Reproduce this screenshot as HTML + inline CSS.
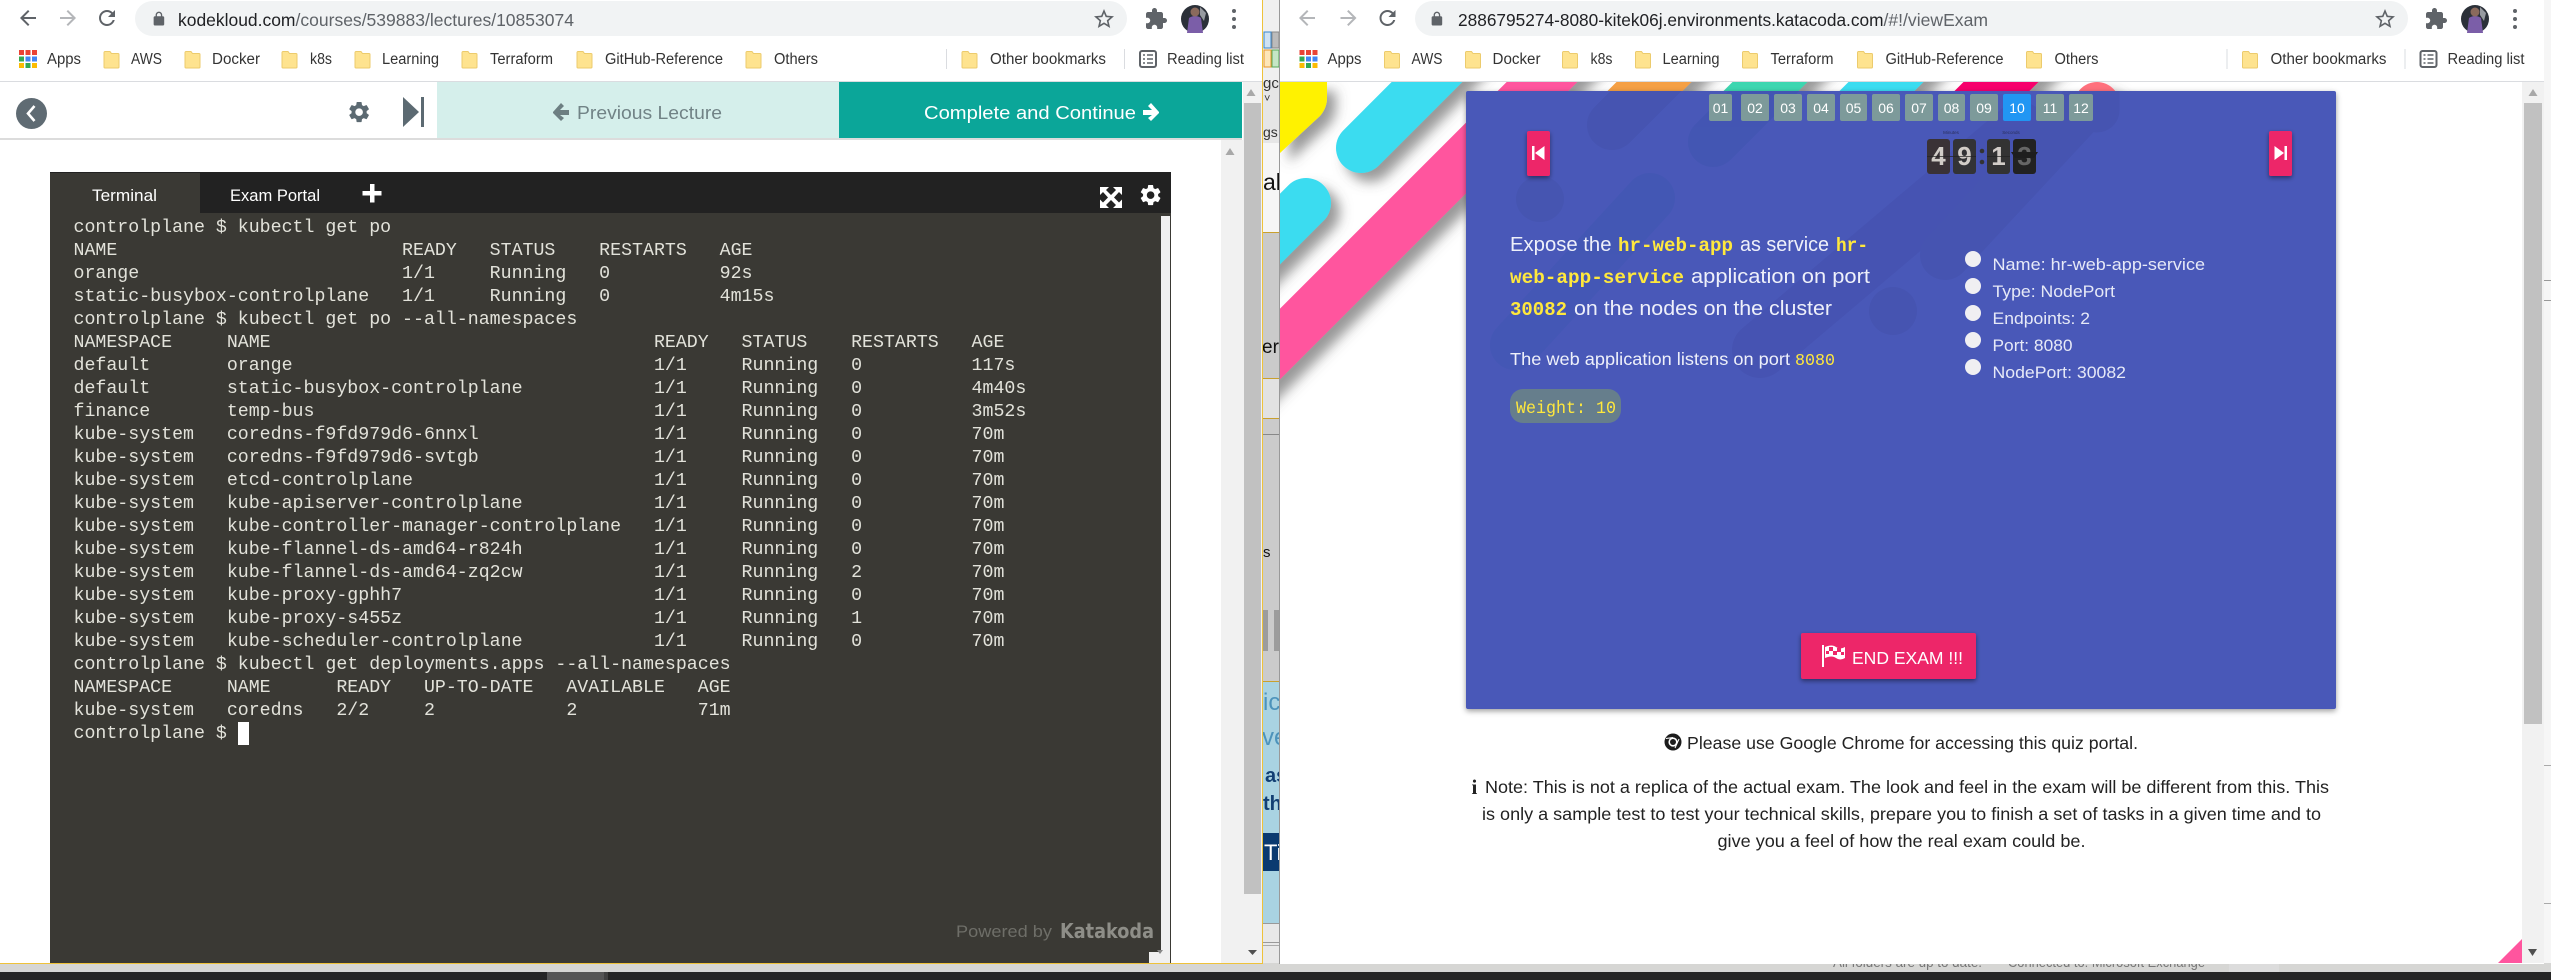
<!DOCTYPE html>
<html><head><meta charset="utf-8"><title>Exam</title>
<style>
html,body{margin:0;padding:0;background:#ccc}
body{width:2551px;height:980px;overflow:hidden;position:relative}
svg{position:absolute;left:0;top:0;display:block}
text{font-family:"Liberation Sans",sans-serif}
.bm{font-size:15.5px;fill:#333}
.mono{font-family:"Liberation Mono",monospace;font-weight:bold;fill:#ffe83c}
.q{font-size:20.5px;fill:#eef0fa}
.li{font-size:17px;fill:#e6e9f7}
.n{font-size:14px;fill:#fff;text-anchor:middle}
.dg{font-size:26px;font-weight:bold;fill:#d2cdc8;text-anchor:middle}
.nt{font-size:17.5px;fill:#222}
pre{position:absolute;left:73.5px;top:216.6px;margin:0;font:18.25px/23px "Liberation Mono",monospace;color:#e2e2da}
</style></head><body>
<svg width="2551" height="980" viewBox="0 0 2551 980" xmlns="http://www.w3.org/2000/svg">
<defs>
<path id="gear" d="M19.14 12.94c.04-.3.06-.61.06-.94 0-.32-.02-.64-.07-.94l2.03-1.58c.18-.14.23-.41.12-.61l-1.92-3.32c-.12-.22-.37-.29-.59-.22l-2.39.96c-.5-.38-1.03-.7-1.62-.94l-.36-2.54c-.04-.24-.24-.41-.48-.41h-3.84c-.24 0-.43.17-.47.41l-.36 2.54c-.59.24-1.13.57-1.62.94l-2.39-.96c-.22-.08-.47 0-.59.22L2.74 8.87c-.12.21-.08.47.12.61l2.03 1.58c-.05.3-.09.63-.09.94s.02.64.07.94l-2.03 1.58c-.18.14-.23.41-.12.61l1.92 3.32c.12.22.37.29.59.22l2.39-.96c.5.38 1.03.7 1.62.94l.36 2.54c.05.24.24.41.48.41h3.84c.24 0 .44-.17.47-.41l.36-2.54c.59-.24 1.13-.56 1.62-.94l2.39.96c.22.08.47 0 .59-.22l1.92-3.32c.12-.22.07-.47-.12-.61l-2.01-1.58zM12 15.6c-1.98 0-3.6-1.62-3.6-3.6s1.62-3.6 3.6-3.6 3.6 1.62 3.6 3.6-1.62 3.6-3.6 3.6z"/>
<path id="back" d="M20 11H7.83l5.59-5.59L12 4l-8 8 8 8 1.41-1.41L7.83 13H20v-2z"/>
<path id="reload" d="M17.65 6.35C16.2 4.9 14.21 4 12 4c-4.42 0-7.99 3.58-7.99 8s3.57 8 7.99 8c3.73 0 6.84-2.55 7.73-6h-2.08c-.82 2.33-3.04 4-5.65 4-3.31 0-6-2.69-6-6s2.69-6 6-6c1.66 0 3.14.69 4.22 1.78L13 11h7V4l-2.35 2.35z"/>
<path id="lock" d="M18 8h-1V6c0-2.76-2.24-5-5-5S7 3.24 7 6v2H6c-1.1 0-2 .9-2 2v10c0 1.1.9 2 2 2h12c1.1 0 2-.9 2-2V10c0-1.1-.9-2-2-2zM9 6c0-1.66 1.34-3 3-3s3 1.34 3 3v2H9V6z"/>
<path id="ext" d="M20.5 11H19V7c0-1.1-.9-2-2-2h-4V3.5C13 2.12 11.88 1 10.5 1S8 2.12 8 3.5V5H4c-1.1 0-1.99.9-1.99 2v3.8H3.5c1.49 0 2.7 1.21 2.7 2.7s-1.21 2.7-2.7 2.7H2V20c0 1.1.9 2 2 2h3.8v-1.5c0-1.49 1.21-2.7 2.7-2.7 1.49 0 2.7 1.21 2.7 2.7V22H17c1.1 0 2-.9 2-2v-4h1.5c1.38 0 2.5-1.12 2.5-2.5S21.88 11 20.5 11z"/>
<path id="star" d="M22 9.24l-7.19-.62L12 2 9.19 8.63 2 9.24l5.46 4.73L5.82 21 12 17.27 18.18 21l-1.63-7.03L22 9.24zM12 15.4l-3.76 2.27 1-4.28-3.32-2.88 4.38-.38L12 6.1l1.71 4.04 4.38.38-3.32 2.88 1 4.28L12 15.4z"/>
<g id="folder"><path d="M1 1.5h5l1.5 2H14a1 1 0 0 1 1 1V17a1 1 0 0 1-1 1H1a1 1 0 0 1-1-1V2.5a1 1 0 0 1 1-1z" fill="#fee38f" stroke="#eccb6d" stroke-width="1"/></g>
<g id="apps"><rect x="0" y="0" width="5" height="5" fill="#ea4335"/><rect x="6.5" y="0" width="5" height="5" fill="#ea4335"/><rect x="13" y="0" width="5" height="5" fill="#ea4335"/><rect x="0" y="6.5" width="5" height="5" fill="#34a853"/><rect x="6.5" y="6.5" width="5" height="5" fill="#4285f4"/><rect x="13" y="6.5" width="5" height="5" fill="#4285f4"/><rect x="0" y="13" width="5" height="5" fill="#fbbc04"/><rect x="6.5" y="13" width="5" height="5" fill="#34a853"/><rect x="13" y="13" width="5" height="5" fill="#fbbc04"/></g>
<g id="rl"><rect x="1" y="1" width="16" height="16" rx="2" fill="none" stroke="#5f6368" stroke-width="2"/><path d="M4 5h2M8 5h6M4 9h2M8 9h6M4 13h2M8 13h6" stroke="#5f6368" stroke-width="1.6"/></g>
<g id="av"><circle r="14" fill="#2b3038"/><path d="M-8 14 L-6 -1 Q0 -5 6 -1 L8 14Z" fill="#7b5ea8"/><circle cy="-7" r="4.5" fill="#8a6a5c"/><path d="M5 -12 L11 -6 L9 2 L5 -4Z" fill="#dfe3e8" opacity=".6"/></g>
<filter id="sh" x="-20%" y="-20%" width="150%" height="150%"><feDropShadow dx="9" dy="9" stdDeviation="6" flood-color="#555" flood-opacity=".6"/></filter>
<filter id="cs" x="-5%" y="-5%" width="110%" height="110%"><feDropShadow dx="0" dy="2" stdDeviation="3" flood-color="#000" flood-opacity=".4"/></filter>
<filter id="bs" x="-20%" y="-20%" width="140%" height="140%"><feDropShadow dx="0" dy="2" stdDeviation="2.5" flood-color="#000" flood-opacity=".45"/></filter>
<clipPath id="pg"><rect x="1280" y="82" width="1242" height="881"/></clipPath>
<clipPath id="cd"><rect x="1466" y="91" width="870" height="618" rx="2"/></clipPath>
<clipPath id="under"><rect x="1800" y="963" width="560" height="9"/></clipPath>
</defs>

<!-- desktop / peeking window -->
<rect width="2551" height="980" fill="#d6d6d4"/>
<rect x="1263" y="0" width="17" height="82" fill="#f0f0f0"/>
<rect x="1264" y="32" width="7" height="16" fill="#cfe2f3" stroke="#3a86c8"/>
<rect x="1272" y="32" width="7" height="16" fill="#bbb" stroke="#888"/>
<rect x="1264" y="50" width="7" height="17" fill="#fde6b8" stroke="#e8962c"/>
<rect x="1272" y="50" width="7" height="17" fill="#c6e6c6" stroke="#58a858"/>
<rect x="1263" y="82" width="17" height="61" fill="#e6e6e6"/>
<text x="1263" y="88" font-size="15" fill="#333">gc</text>
<text x="1264" y="102" font-size="11" fill="#333">˅</text>
<text x="1263" y="137" font-size="14" fill="#333">gs</text>
<rect x="1263" y="143" width="17" height="89" fill="#f6f6f6"/>
<text x="1263" y="190" font-size="23" fill="#111">al</text>
<rect x="1263" y="232" width="17" height="146" fill="#cacaca"/>
<rect x="1263" y="232" width="17" height="1" fill="#c9a02e"/>
<text x="1262" y="353" font-size="19" fill="#111">er</text>
<rect x="1263" y="378" width="17" height="40" fill="#e2e2e2"/>
<rect x="1263" y="378" width="17" height="1" fill="#c9a02e"/>
<rect x="1263" y="418" width="17" height="264" fill="#cbcbcb"/>
<rect x="1263" y="418" width="17" height="1" fill="#c9a02e"/>
<rect x="1263" y="434" width="17" height="1" fill="#888"/>
<text x="1263" y="557" font-size="15" fill="#111">s</text>
<rect x="1263" y="610" width="5" height="41" fill="#9c9c9c"/>
<rect x="1274" y="610" width="6" height="41" fill="#9c9c9c"/>
<rect x="1263" y="681" width="17" height="242" fill="#a9d3e2"/>
<rect x="1263" y="681" width="17" height="1" fill="#c9a02e"/>
<text x="1263" y="710" font-size="24" fill="#4d93bb">ic</text>
<text x="1262" y="745" font-size="24" fill="#4d93bb">ve</text>
<text x="1265" y="782" font-size="20" font-weight="bold" fill="#123f73">as</text>
<text x="1263" y="810" font-size="20" font-weight="bold" fill="#123f73">the</text>
<rect x="1263" y="833" width="17" height="38" fill="#0b3a70"/>
<text x="1264" y="860" font-size="22" fill="#fff">Tip</text>
<rect x="1263" y="923" width="17" height="40" fill="#e8e8e8"/>
<rect x="1263" y="923" width="17" height="1" fill="#999"/>
<rect x="1263" y="942" width="17" height="1" fill="#999"/>
<rect x="1263" y="945" width="17" height="1" fill="#aaa"/>
<rect x="2544" y="0" width="7" height="963" fill="#f6f6f6"/>
<rect x="2544" y="280" width="7" height="1" fill="#999"/>
<rect x="2544" y="300" width="7" height="1" fill="#999"/>
<rect x="2544" y="765" width="7" height="1" fill="#aaa"/>
<rect x="2544" y="903" width="7" height="1" fill="#aaa"/>
<rect x="2229" y="963" width="50" height="9" fill="#dcdcdc"/>
<g clip-path="url(#under)"><text x="1833" y="967" font-size="14" fill="#777" textLength="149" lengthAdjust="spacingAndGlyphs">All folders are up to date.</text><text x="2008" y="967" font-size="14" fill="#777" textLength="197" lengthAdjust="spacingAndGlyphs">Connected to: Microsoft Exchange</text></g>
<!-- taskbar -->
<rect x="0" y="972" width="2551" height="8" fill="#252525"/>
<rect x="547" y="972" width="57" height="8" fill="#555"/>
<rect x="604" y="972" width="4" height="8" fill="#404040"/>

<!-- LEFT WINDOW -->
<rect x="0" y="0" width="1263" height="964" fill="#fff"/>
<rect x="0" y="81" width="1262" height="1" fill="#dadce0"/>
<use href="#back" transform="translate(16,6) scale(1)" fill="#5f6368"/>
<use href="#back" transform="translate(80,30) rotate(180)" fill="#b4b6b9"/>
<use href="#reload" transform="translate(95,6)" fill="#5f6368"/>
<rect x="135" y="1" width="992" height="35" rx="17.5" fill="#f1f3f4"/>
<use href="#lock" transform="translate(151,11) scale(.66)" fill="#5f6368"/>
<text x="178" y="26" font-size="17.5" fill="#202124" textLength="117.5" lengthAdjust="spacingAndGlyphs">kodekloud.com</text>
<text x="295.5" y="26" font-size="17.5" fill="#5f6368" textLength="278.5" lengthAdjust="spacingAndGlyphs">/courses/539883/lectures/10853074</text>
<use href="#star" transform="translate(1092,7)" fill="#5f6368"/>
<use href="#ext" transform="translate(1144,7)" fill="#5f6368"/>
<use href="#av" transform="translate(1195,19)"/>
<g fill="#5f6368"><circle cx="1234" cy="11" r="2"/><circle cx="1234" cy="19" r="2"/><circle cx="1234" cy="27" r="2"/></g>

<use href="#apps" transform="translate(19,50)"/>
<text class="bm" x="47" y="64" textLength="34" lengthAdjust="spacingAndGlyphs">Apps</text>
<use href="#folder" x="104" y="50"/><text class="bm" x="131" y="64" textLength="31" lengthAdjust="spacingAndGlyphs">AWS</text>
<use href="#folder" x="185" y="50"/><text class="bm" x="212" y="64" textLength="48" lengthAdjust="spacingAndGlyphs">Docker</text>
<use href="#folder" x="282" y="50"/><text class="bm" x="310" y="64" textLength="22" lengthAdjust="spacingAndGlyphs">k8s</text>
<use href="#folder" x="355" y="50"/><text class="bm" x="382" y="64" textLength="57" lengthAdjust="spacingAndGlyphs">Learning</text>
<use href="#folder" x="462" y="50"/><text class="bm" x="490" y="64" textLength="63" lengthAdjust="spacingAndGlyphs">Terraform</text>
<use href="#folder" x="577" y="50"/><text class="bm" x="605" y="64" textLength="118" lengthAdjust="spacingAndGlyphs">GitHub-Reference</text>
<use href="#folder" x="746" y="50"/><text class="bm" x="774" y="64" textLength="44" lengthAdjust="spacingAndGlyphs">Others</text>
<rect x="946" y="49" width="1" height="20" fill="#dadce0"/>
<use href="#folder" x="962" y="50"/><text class="bm" x="990" y="64" textLength="116" lengthAdjust="spacingAndGlyphs">Other bookmarks</text>
<rect x="1124" y="49" width="1" height="20" fill="#dadce0"/>
<use href="#rl" transform="translate(1139,50)"/>
<text class="bm" x="1167" y="64" textLength="77" lengthAdjust="spacingAndGlyphs">Reading list</text>

<!-- course header -->
<circle cx="31.5" cy="113.5" r="15.5" fill="#5f6b73"/>
<path d="M34.5 106 L28 113.5 L34.5 121" fill="none" stroke="#fff" stroke-width="2.6"/>
<use href="#gear" transform="translate(346.5,99.5) scale(1.05)" fill="#5c6a72"/>
<path d="M403 97 L419 112 L403 127Z" fill="#5c6a72"/><rect x="421" y="97" width="3" height="30" fill="#5c6a72"/>
<rect x="437" y="82" width="402" height="56" fill="#d5efeb"/>
<rect x="839" y="82" width="403" height="56" fill="#0ba699"/>
<path d="M553 112 L561 103 L564 106 L560 110 H569 V115 H560 L564 118 L561 121 L553 113Z" fill="#6d7f82"/>
<text x="577" y="119" font-size="18.5" fill="#718386" textLength="145" lengthAdjust="spacingAndGlyphs">Previous Lecture</text>
<text x="924" y="119" font-size="18.5" fill="#fff" textLength="212" lengthAdjust="spacingAndGlyphs">Complete and Continue</text>
<path d="M1159 112 L1151 103 L1148 106 L1152 110 H1143 V115 H1152 L1148 118 L1151 121 L1159 113Z" fill="#fff"/>
<rect x="0" y="138" width="1242" height="2" fill="#dcdcdc"/>

<!-- scrollbars -->
<rect x="1221" y="140" width="22" height="823" fill="#f1f1f1"/>
<path d="M1230 148 L1234.5 155 H1225.5Z" fill="#a8a8a8"/>
<rect x="1243" y="82" width="19" height="881" fill="#f1f1f1"/>
<rect x="1244" y="103" width="17" height="791" fill="#c1c1c1"/>
<path d="M1251 89 L1255.5 96 H1246.5Z" fill="#a8a8a8"/>
<path d="M1248 950 H1257 L1252.5 955Z" fill="#505050"/>
<rect x="1262" y="0" width="1" height="964" fill="#eec23a"/>
<rect x="0" y="963" width="1263" height="1" fill="#eec23a"/>

<!-- terminal -->
<rect x="50" y="172" width="1121" height="791" fill="#3a3934"/>
<rect x="50" y="172" width="1121" height="41" fill="#222"/>
<rect x="50" y="173" width="150" height="40" fill="#3a3934"/>
<text x="92" y="201" font-size="17" fill="#fff" textLength="65" lengthAdjust="spacingAndGlyphs">Terminal</text>
<text x="230" y="201" font-size="17" fill="#fff" textLength="90" lengthAdjust="spacingAndGlyphs">Exam Portal</text>
<path d="M370 184h4.500v7h7v4.500h-7v7H370v-7h-7.500V191h7.500z" fill="#fff"/>
<g fill="#fff"><path d="M1100 187h9l-3 3 5 5 5-5-3-3h9v8l-3-3-5 5.500 5 5 3-3v8.500h-9l3-3-5-5-5 5 3 3h-9v-8.500l3 3 5-5-5-5.500-3 3z"/></g>
<use href="#gear" transform="translate(1138,182.500) scale(1.05)" fill="#fff"/>
<rect x="1161" y="216" width="9" height="747" fill="#f0f0f0"/>
<rect x="1170" y="213" width="1" height="750" fill="#3a3934"/>
<rect x="1149" y="952" width="12" height="11" fill="#f0f0f0"/>
<path d="M1157 950 H1163 L1160 954Z" fill="#888"/>
<rect x="238" y="722" width="11" height="23" fill="#fff"/>
<text x="956" y="937" font-size="16.5" fill="#6e6e68" textLength="96" lengthAdjust="spacingAndGlyphs">Powered by</text>
<text x="1060" y="938" font-size="20" font-weight="bold" fill="#8e8e88" style="font-family:'DejaVu Sans',sans-serif" textLength="94" lengthAdjust="spacingAndGlyphs">Katakoda</text>

<!-- RIGHT WINDOW -->
<rect x="1279" y="0" width="1265" height="964" fill="#fff"/>
<rect x="1279" y="0" width="1" height="964" fill="#999"/>
<rect x="1280" y="81" width="1264" height="1" fill="#dadce0"/>
<use href="#back" transform="translate(1295,6)" fill="#b4b6b9"/>
<use href="#back" transform="translate(1360.500,30) rotate(180)" fill="#b4b6b9"/>
<use href="#reload" transform="translate(1375.500,6)" fill="#5f6368"/>
<rect x="1415" y="1" width="993" height="35" rx="17.5" fill="#f1f3f4"/>
<use href="#lock" transform="translate(1429,11) scale(.66)" fill="#5f6368"/>
<text x="1458" y="26" font-size="17.5" fill="#202124" textLength="425.500" lengthAdjust="spacingAndGlyphs">2886795274-8080-kitek06j.environments.katacoda.com</text>
<text x="1883.500" y="26" font-size="17.5" fill="#5f6368" textLength="104.500" lengthAdjust="spacingAndGlyphs">/#!/viewExam</text>
<use href="#star" transform="translate(2373,7)" fill="#5f6368"/>
<use href="#ext" transform="translate(2424,7)" fill="#5f6368"/>
<use href="#av" transform="translate(2475,19)"/>
<g fill="#5f6368"><circle cx="2515" cy="11" r="2"/><circle cx="2515" cy="19" r="2"/><circle cx="2515" cy="27" r="2"/></g>
<g transform="translate(1280.500,0)">
<use href="#apps" transform="translate(19,50)"/>
<text class="bm" x="47" y="64" textLength="34" lengthAdjust="spacingAndGlyphs">Apps</text>
<use href="#folder" x="104" y="50"/><text class="bm" x="131" y="64" textLength="31" lengthAdjust="spacingAndGlyphs">AWS</text>
<use href="#folder" x="185" y="50"/><text class="bm" x="212" y="64" textLength="48" lengthAdjust="spacingAndGlyphs">Docker</text>
<use href="#folder" x="282" y="50"/><text class="bm" x="310" y="64" textLength="22" lengthAdjust="spacingAndGlyphs">k8s</text>
<use href="#folder" x="355" y="50"/><text class="bm" x="382" y="64" textLength="57" lengthAdjust="spacingAndGlyphs">Learning</text>
<use href="#folder" x="462" y="50"/><text class="bm" x="490" y="64" textLength="63" lengthAdjust="spacingAndGlyphs">Terraform</text>
<use href="#folder" x="577" y="50"/><text class="bm" x="605" y="64" textLength="118" lengthAdjust="spacingAndGlyphs">GitHub-Reference</text>
<use href="#folder" x="746" y="50"/><text class="bm" x="774" y="64" textLength="44" lengthAdjust="spacingAndGlyphs">Others</text>
<rect x="946" y="49" width="1" height="20" fill="#dadce0"/>
<use href="#folder" x="962" y="50"/><text class="bm" x="990" y="64" textLength="116" lengthAdjust="spacingAndGlyphs">Other bookmarks</text>
<rect x="1124" y="49" width="1" height="20" fill="#dadce0"/>
<use href="#rl" transform="translate(1139,50)"/>
<text class="bm" x="1167" y="64" textLength="77" lengthAdjust="spacingAndGlyphs">Reading list</text>
</g>

<!-- background stripes -->
<g clip-path="url(#pg)">
<g filter="url(#sh)">
<path d="M1280 82H1327V98Q1327 108 1320 116L1280 153Z" fill="#fff200"/>
<path d="M1461 48L1361 148" stroke="#3adcf0" stroke-width="50" stroke-linecap="round"/>
<path d="M1306 203L1200 309" stroke="#3adcf0" stroke-width="50" stroke-linecap="round"/>
<path d="M1592 32L1142 482" stroke="#ff559e" stroke-width="50"/>
<path d="M1704 32L1604 132" stroke="#f5a044" stroke-width="53"/>
<path d="M1820 32L1720 132" stroke="#3dd6b0" stroke-width="53"/>
<path d="M1936 32L1836 132" stroke="#3adcf0" stroke-width="53"/>
<path d="M2051 32L1951 132" stroke="#f7046c" stroke-width="53"/>
<circle cx="2097" cy="105" r="23" fill="#ff6f7d"/>
</g>
<path d="M2522 939V963H2498Z" fill="#ff559e"/>
</g>

<!-- card -->
<rect x="1466" y="91" width="870" height="618" rx="2" fill="#4858b8" filter="url(#cs)"/>
<g clip-path="url(#cd)" opacity=".55">
<g fill="none" stroke-linecap="round" stroke-width="50">
<path d="M1712 25L1612 125" stroke="#4452ac"/>
<path d="M1813 42L1713 142" stroke="#3f55b0"/>
<path d="M1650 198L1515 345" stroke="#3f57b2"/>
<path d="M2020 130L1760 350" stroke="#4550ae" stroke-width="56"/>
<path d="M2080 110L1945 255" stroke="#4452ac"/>
<path d="M2097 60L2097 110" stroke="#4452ac" stroke-width="45"/>
</g>
<ellipse cx="1540" cy="199" rx="24" ry="23" fill="#4453ac"/>
<ellipse cx="1893" cy="311" rx="24" ry="24" fill="#4452ac"/>
</g>

<!-- number tabs -->
<g fill="#7d9a9a">
<rect x="1709" y="94" width="23" height="27" rx="2"/><rect x="1741" y="94" width="28" height="27" rx="2"/><rect x="1774" y="94" width="28" height="27" rx="2"/><rect x="1807" y="94" width="28" height="27" rx="2"/><rect x="1840" y="94" width="27" height="27" rx="2"/><rect x="1872" y="94" width="28" height="27" rx="2"/><rect x="1905" y="94" width="28" height="27" rx="2"/><rect x="1938" y="94" width="27" height="27" rx="2"/><rect x="1970" y="94" width="28" height="27" rx="2"/><rect x="2036" y="94" width="28" height="27" rx="2"/><rect x="2069" y="94" width="24" height="27" rx="2"/>
</g>
<rect x="2003" y="94" width="28" height="27" rx="2" fill="#2196f3"/>
<text class="n" x="1720.500" y="113">01</text><text class="n" x="1755" y="113">02</text><text class="n" x="1788" y="113">03</text><text class="n" x="1821" y="113">04</text><text class="n" x="1853.500" y="113">05</text><text class="n" x="1886" y="113">06</text><text class="n" x="1919" y="113">07</text><text class="n" x="1951.500" y="113">08</text><text class="n" x="1984" y="113">09</text><text class="n" x="2017" y="113">10</text><text class="n" x="2050" y="113">11</text><text class="n" x="2081" y="113">12</text>

<!-- prev/next -->
<rect x="1527" y="131" width="23" height="45" rx="2" fill="#ed2769" filter="url(#bs)"/>
<path d="M1532 146h2.500v14H1532zM1544.500 146v14l-9.500-7z" fill="#fff"/>
<rect x="2269" y="131" width="23" height="45" rx="2" fill="#ed2769" filter="url(#bs)"/>
<path d="M2287 146h-2.500v14h2.500zM2274.500 146v14l9.500-7z" fill="#fff"/>

<!-- flip clock -->
<text x="1951" y="134" font-size="4.500" fill="#2a2f5c" text-anchor="middle">Minutes</text>
<text x="2011" y="134" font-size="4.500" fill="#2a2f5c" text-anchor="middle">Seconds</text>
<rect x="1927" y="139" width="23" height="35" rx="3" fill="#3a3236"/>
<rect x="1953" y="139" width="23" height="35" rx="3" fill="#333336"/>
<rect x="1987" y="139" width="23" height="35" rx="3" fill="#333"/>
<rect x="2013" y="139" width="23" height="35" rx="3" fill="#222"/>
<text class="dg" x="1938.500" y="165">4</text><text class="dg" x="1964.500" y="165">9</text><text class="dg" x="1998.500" y="165">1</text>
<text class="dg" x="2024.500" y="165" style="fill:#666">3</text>
<path d="M2011 152H2038L2034 158H2015Z" fill="#1e1e1e"/>
<rect x="1927" y="156" width="49" height="1" fill="#222" opacity=".7"/><rect x="1987" y="156" width="23" height="1" fill="#222" opacity=".7"/>
<circle cx="1982" cy="151" r="2.300" fill="#333"/><circle cx="1982" cy="162" r="2.300" fill="#333"/>

<!-- question -->
<text class="q" x="1510" y="251" textLength="101.500" lengthAdjust="spacingAndGlyphs">Expose the</text>
<text class="mono" x="1618" y="251" font-size="19" textLength="115" lengthAdjust="spacingAndGlyphs">hr-web-app</text>
<text class="q" x="1740" y="251" textLength="89" lengthAdjust="spacingAndGlyphs">as service</text>
<text class="mono" x="1836" y="251" font-size="19" textLength="32" lengthAdjust="spacingAndGlyphs">hr-</text>
<text class="mono" x="1510" y="283" font-size="19" textLength="174" lengthAdjust="spacingAndGlyphs">web-app-service</text>
<text class="q" x="1691" y="283" textLength="179" lengthAdjust="spacingAndGlyphs">application on port</text>
<text class="mono" x="1510" y="315" font-size="19" textLength="57" lengthAdjust="spacingAndGlyphs">30082</text>
<text class="q" x="1574" y="315" textLength="258" lengthAdjust="spacingAndGlyphs">on the nodes on the cluster</text>
<text x="1510" y="365" font-size="17.5" fill="#eef0fa" textLength="280" lengthAdjust="spacingAndGlyphs">The web application listens on port</text>
<text class="mono" x="1795" y="365" font-size="16.500" textLength="40" lengthAdjust="spacingAndGlyphs" style="font-weight:normal">8080</text>
<rect x="1510" y="389" width="111" height="34" rx="13" fill="#667e8c"/>
<text class="mono" x="1516" y="413" font-size="17.500" textLength="100" lengthAdjust="spacingAndGlyphs" style="font-weight:normal">Weight: 10</text>

<!-- list -->
<g fill="#f0eff2"><circle cx="1973" cy="259" r="8"/><circle cx="1973" cy="286" r="8"/><circle cx="1973" cy="313" r="8"/><circle cx="1973" cy="340" r="8"/><circle cx="1973" cy="367" r="8"/></g>
<text class="li" x="1992.500" y="270" textLength="212.500" lengthAdjust="spacingAndGlyphs">Name: hr-web-app-service</text>
<text class="li" x="1992.500" y="297" textLength="122.500" lengthAdjust="spacingAndGlyphs">Type: NodePort</text>
<text class="li" x="1992.500" y="324" textLength="97.500" lengthAdjust="spacingAndGlyphs">Endpoints: 2</text>
<text class="li" x="1992.500" y="351" textLength="80" lengthAdjust="spacingAndGlyphs">Port: 8080</text>
<text class="li" x="1992.500" y="378" textLength="133.500" lengthAdjust="spacingAndGlyphs">NodePort: 30082</text>

<!-- end exam -->
<rect x="1801" y="633" width="175" height="46" rx="2" fill="#ed2769" filter="url(#bs)"/>
<path d="M1823 645V667" stroke="#fff" stroke-width="2"/>
<path d="M1825 647Q1832 644 1836 647Q1840 650 1845 647V658Q1840 661 1836 658Q1832 655 1825 658Z" fill="#fff"/>
<path d="M1829 647h4v4h-4zM1837 648h4v4h-4zM1833 651h4v4h-4zM1841 652h3v3h-3zM1826 651h3v3h-3z" fill="#ed2769"/>
<text x="1852" y="664" font-size="17.500" fill="#fff" textLength="111" lengthAdjust="spacingAndGlyphs">END EXAM !!!</text>

<!-- notes -->
<circle cx="1673" cy="742" r="8.500" fill="#1c1c1c"/><circle cx="1673" cy="742" r="4.600" fill="#fff"/><circle cx="1673" cy="742" r="3" fill="#1c1c1c"/><path d="M1666 738.500L1673 737.500M1679 739L1675 748" stroke="#fff" stroke-width="1"/>
<text class="nt" x="1687" y="749" textLength="451" lengthAdjust="spacingAndGlyphs">Please use Google Chrome for accessing this quiz portal.</text>
<text x="1471.500" y="794" font-size="21" font-weight="bold" fill="#222" style="font-family:'Liberation Serif',serif">i</text>
<text class="nt" x="1485" y="793" textLength="844" lengthAdjust="spacingAndGlyphs">Note: This is not a replica of the actual exam. The look and feel in the exam will be different from this. This</text>
<text class="nt" x="1482" y="820" textLength="839" lengthAdjust="spacingAndGlyphs">is only a sample test to test your technical skills, prepare you to finish a set of tasks in a given time and to</text>
<text class="nt" x="1717.500" y="847" textLength="368" lengthAdjust="spacingAndGlyphs">give you a feel of how the real exam could be.</text>

<!-- right scrollbar -->
<rect x="2522" y="82" width="22" height="881" fill="#f1f1f1"/>
<rect x="2524" y="103" width="18" height="621" fill="#c1c1c1"/>
<path d="M2533 89L2537.500 96H2528.500Z" fill="#a8a8a8"/>
<path d="M2528 949H2537L2532.500 956Z" fill="#505050"/>
</svg>
<pre>controlplane $ kubectl get po
NAME                          READY   STATUS    RESTARTS   AGE
orange                        1/1     Running   0          92s
static-busybox-controlplane   1/1     Running   0          4m15s
controlplane $ kubectl get po --all-namespaces
NAMESPACE     NAME                                   READY   STATUS    RESTARTS   AGE
default       orange                                 1/1     Running   0          117s
default       static-busybox-controlplane            1/1     Running   0          4m40s
finance       temp-bus                               1/1     Running   0          3m52s
kube-system   coredns-f9fd979d6-6nnxl                1/1     Running   0          70m
kube-system   coredns-f9fd979d6-svtgb                1/1     Running   0          70m
kube-system   etcd-controlplane                      1/1     Running   0          70m
kube-system   kube-apiserver-controlplane            1/1     Running   0          70m
kube-system   kube-controller-manager-controlplane   1/1     Running   0          70m
kube-system   kube-flannel-ds-amd64-r824h            1/1     Running   0          70m
kube-system   kube-flannel-ds-amd64-zq2cw            1/1     Running   2          70m
kube-system   kube-proxy-gphh7                       1/1     Running   0          70m
kube-system   kube-proxy-s455z                       1/1     Running   1          70m
kube-system   kube-scheduler-controlplane            1/1     Running   0          70m
controlplane $ kubectl get deployments.apps --all-namespaces
NAMESPACE     NAME      READY   UP-TO-DATE   AVAILABLE   AGE
kube-system   coredns   2/2     2            2           71m
controlplane $ </pre>
</body></html>
